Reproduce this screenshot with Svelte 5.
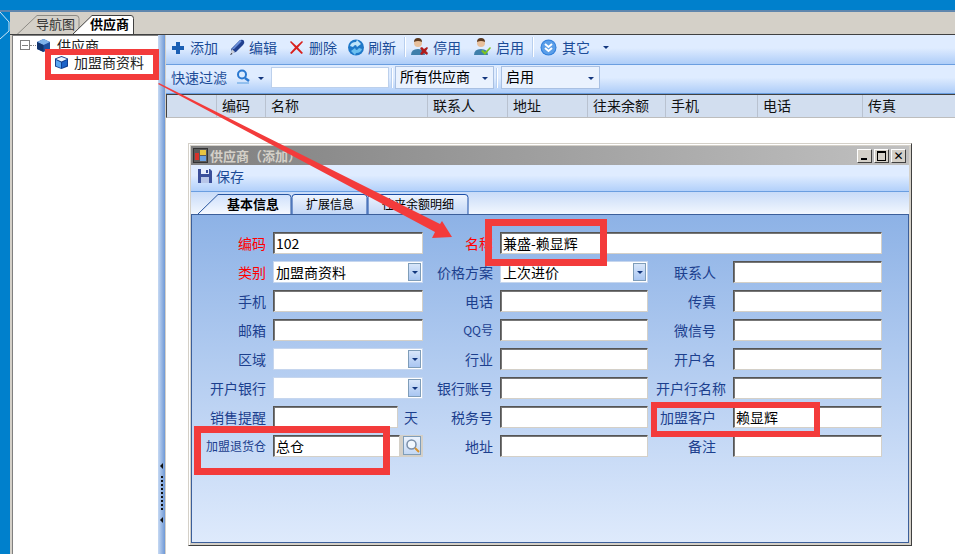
<script>
	const columns = [
		{ name: '', w: 50 }, { name: '编码', w: 49 }, { name: '名称', w: 162 }, { name: '联系人', w: 80 },
		{ name: '地址', w: 80 }, { name: '往来余额', w: 78 }, { name: '手机', w: 92 }, { name: '电话', w: 105 }, { name: '传真', w: 93 }
	];

	// each row: label / field pairs, left to right
	const rows = [
		[{ label: '编码', red: true, value: '102' }, { label: '名称', red: true, value: '兼盛-赖显辉', span: true }],
		[{ label: '类别', red: true, value: '加盟商资料', type: 'select' }, { label: '价格方案', value: '上次进价', type: 'select' }, { label: '联系人' }],
		[{ label: '手机' }, { label: '电话' }, { label: '传真' }],
		[{ label: '邮箱' }, { label: 'QQ号', small: true }, { label: '微信号' }],
		[{ label: '区域', type: 'select' }, { label: '行业' }, { label: '开户名' }],
		[{ label: '开户银行', type: 'select' }, { label: '银行账号' }, { label: '开户行名称', wide: true }],
		[{ label: '销售提醒', type: 'days' }, { label: '税务号' }, { label: '加盟客户', value: '赖显辉' }],
		[{ label: '加盟退货仓', small: true, value: '总仓', type: 'lookup' }, { label: '地址' }, { label: '备注' }]
	];
</script>

<div class="screen">
	<div class="topbar"></div>
	<div class="shell">
		<div class="edge">
			<svg width="10" height="28" viewBox="0 0 10 28"><path d="M0 0l9 10v9L0 27" fill="none" stroke="#cfe6f7"/></svg>
		</div>
		<div class="main">
			<div class="tabstrip">
				<svg class="tabshape" width="130" height="24" viewBox="0 0 130 24">
					<path d="M7 23.500L27 4.500h39q3 0 3 3V23.500" fill="#d4d0c8" stroke="#8c8a84"/>
					<path d="M62 24L82 4.500h39q2.500 0 2.500 3V24z" fill="#fff" stroke="#404040"/>
				</svg>
				<span class="tab t1">导航图</span>
				<span class="tab t2">供应商</span>
			</div>
			<div class="work">
				<div class="tree">
					<div class="node root">
						<span class="expander"></span>
						<span class="dots"></span>
						<svg width="15" height="15" viewBox="0 0 15 15">
							<path d="M7.500 1L14 4v7l-6.500 3L1 11V4z" fill="#1f4f9e"/>
							<path d="M7.500 1L14 4 7.500 7 1 4z" fill="#7fb2ea"/>
							<path d="M1 4l6.500 3v7L1 11z" fill="#12356f"/>
						</svg>
						<span>供应商</span>
					</div>
					<div class="node child">
						<svg width="15" height="15" viewBox="0 0 15 15">
							<path d="M7.500 1L14 3.500v8L7.500 14 1 11.500v-8z" fill="#123f8f"/>
							<path d="M7.500 2L13 4 7.500 6.500 2 4z" fill="#eaf5ff"/>
							<path d="M2 5l5 2.500V13l-5-2z" fill="#5aa6f0"/>
							<path d="M8 7.500L13 5v5.500L8 13z" fill="#1c63c8"/>
						</svg>
						<span>加盟商资料</span>
					</div>
				</div>
				<div class="splitter">
					<i class="grip left"></i>
					<i class="dotted"></i>
					<i class="grip"></i>
				</div>
				<div class="content">
					<div class="bar toolbar">
						<div class="tool first">
							<svg width="16" height="16" viewBox="0 0 16 16"><path d="M6 3h4v4h4v4h-4v4H6v-4H2V7h4z" fill="#1a5fb4"/></svg>
							<span>添加</span>
						</div>
						<div class="tool">
							<svg width="16" height="18" viewBox="0 0 16 18"><path d="M11 2q3-1 4 1t-1 4l-7 7-4 1-1-4z" fill="#21408f"/><path d="M11 2q1.500 0 1.500 1.500L5 11l-2 0z" fill="#6b90dc"/><path d="M3 11l3 3-5 3z" fill="#c9ced8"/><path d="M1 17l1.500-2 1 1z" fill="#223"/></svg>
							<span>编辑</span>
						</div>
						<div class="tool">
							<svg width="17" height="16" viewBox="0 0 17 16"><path d="M3 2l5.500 5L14 2l1 1-5 5.500 5 5.500-1.500 1L8.500 10 3.500 15 2 14l5-5.500L2 3z" fill="#d9201c"/></svg>
							<span>删除</span>
						</div>
						<div class="tool">
							<svg width="16" height="17" viewBox="0 0 16 17"><ellipse cx="8" cy="8.500" rx="8" ry="8" fill="#1f78c8"/><path d="M2 7q1-4 6-4l1-2 4 4-4 3-1-2q-2 0-3 2z" fill="#bfe4fa"/><path d="M14 10q-1 4-6 4l-1 2-4-4 4-3 1 2q2 0 3-2z" fill="#6cc0f0"/></svg>
							<span>刷新</span>
						</div>
						<i class="sep s1"></i>
						<div class="tool">
							<svg width="19" height="20" viewBox="0 0 19 20"><circle cx="8" cy="6" r="4" fill="#e8c09c"/><path d="M4 5q0-4 4-4t4 4q-4-2-8 0z" fill="#5c3a20"/><path d="M1 18q0-6 7-6t7 6z" fill="#3f7faa"/><path d="M10 11l2-1 2 2 3-2 1 1-2 3 2 2-1 2-3-2-2 2-2-1 2-3z" fill="#b01c1c"/></svg>
							<span>停用</span>
						</div>
						<div class="tool enable">
							<svg width="19" height="20" viewBox="0 0 19 20"><circle cx="8" cy="6" r="4" fill="#e8c09c"/><path d="M4 5q0-4 4-4t4 4q-4-2-8 0z" fill="#5c3a20"/><path d="M1 18q0-6 7-6t7 6z" fill="#3f7faa"/><path d="M8 14l2-1 2 2 5-5 1 1-6 7z" fill="#7cc520"/></svg>
							<span>启用</span>
						</div>
						<i class="sep"></i>
						<div class="tool other">
							<svg width="17" height="17" viewBox="0 0 17 17"><circle cx="8.500" cy="8.500" r="8" fill="#2f7fdc"/><circle cx="8.500" cy="8.500" r="7" fill="#5a9ee8"/><path d="M5 5l3.500 3L12 5M5 9l3.500 3L12 9" fill="none" stroke="#fff" stroke-width="2"/></svg>
							<span>其它</span>
						</div>
						<i class="caret other-caret"></i>
					</div>
					<div class="bar filter">
						<span class="filter-label">快速过滤</span>
						<svg class="finder" width="15" height="15" viewBox="0 0 15 15"><circle cx="6" cy="5.500" r="4" fill="#dcecff" stroke="#2a78d0" stroke-width="2"/><path d="M9 9l4 3" stroke="#2a78d0" stroke-width="2.500"/><path d="M1 14h12" stroke="#7fb4ea" stroke-width="1.500"/></svg>
						<i class="caret"></i>
						<div class="search"></div>
						<i class="sep short"></i>
						<div class="combo c1">所有供应商<i class="caret"></i></div>
						<i class="sep short"></i>
						<div class="combo c2">启用<i class="caret"></i></div>
					</div>
					<div class="gridarea">
						<div class="gridhead">
							{#each columns as c}
								<div class="col" style="width:{c.w}px">{c.name}</div>
							{/each}
						</div>

						<div class="window">
							<div class="titlebar">
								<svg width="15" height="15" viewBox="0 0 15 15">
									<rect x=".5" y=".5" width="14" height="14" fill="#5a5a5a" stroke="#333"/>
									<rect x="2" y="5" width="4" height="7" fill="#d8322a"/>
									<rect x="7" y="2" width="6" height="5" fill="#e8c440"/>
									<rect x="7" y="8" width="6" height="5" fill="#6aa0e0"/>
								</svg>
								<span class="title">供应商（添加）</span>
								<div class="winbtns">
									<button aria-label="最小化"><i class="mn"></i></button>
									<button aria-label="最大化"><i class="mx"></i></button>
									<button class="close" aria-label="关闭">✕</button>
								</div>
							</div>
							<div class="savebar">
								<svg width="16" height="16" viewBox="0 0 16 16"><path d="M1 1h12l2 2v12H1z" fill="#3b4f9a"/><path d="M4 1h8v5H4z" fill="#e8eefc"/><path d="M4 9h8v6H4z" fill="#b8c6e8"/><path d="M9 2h2v3H9z" fill="#3b4f9a"/></svg>
								<span>保存</span>
							</div>
							<div class="formtabs">
								<svg class="formtabshape" width="282" height="22" viewBox="0 0 282 22">
									<path d="M7 22L27 2.500h70q3 0 3 3V22" fill="url(#active)" stroke="#27559f"/>
									<path d="M101 22V5.500q0-3 3-3h69q3 0 3 3V22" fill="url(#idle)" stroke="#1c4ea6"/>
									<path d="M177 22V5.500q0-3 3-3h94q3 0 3 3V22" fill="url(#idle)" stroke="#1c4ea6"/>
									<defs>
										<linearGradient id="active" x1="0" y1="0" x2="0" y2="1"><stop offset="0" stop-color="#cfe0fb"/><stop offset="1" stop-color="#f5f9ff"/></linearGradient>
										<linearGradient id="idle" x1="0" y1="0" x2="0" y2="1"><stop offset="0" stop-color="#eef4fe"/><stop offset="1" stop-color="#c4d8f6"/></linearGradient>
									</defs>
								</svg>
								<span class="ftab base">基本信息</span>
								<span class="ftab ext">扩展信息</span>
								<span class="ftab bal">往来余额明细</span>
							</div>
							<div class="panel">
								<div class="form">
									{#each rows as row}
										{#each row as f, i}
											<span class="lbl" class:red={f.red} class:small={f.small} class:third={i === 2 && !f.wide}>{f.label}</span>
											{#if f.type === 'select'}
												<div class="select">
													<span>{f.value ?? ''}</span>
													<b class="dropbtn"><i></i></b>
												</div>
											{:else if f.type === 'days'}
												<div class="days"><div class="input">{f.value ?? ''}</div><span>天</span></div>
											{:else if f.type === 'lookup'}
												<div class="lookup">
													<div class="input">{f.value}</div>
													<b class="lookbtn">
														<svg width="15" height="15" viewBox="0 0 15 15"><circle cx="6.500" cy="6.500" r="4.500" fill="#f2f8ff" stroke="#7a8ea8" stroke-width="1.500"/><path d="M10 10l4 4" stroke="#d9922e" stroke-width="2"/></svg>
													</b>
												</div>
											{:else}
												<div class="input" class:span={f.span}>{f.value ?? ''}</div>
											{/if}
										{/each}
									{/each}
								</div>
							</div>
						</div>
					</div>
				</div>
			</div>
		</div>
	</div>

	<!-- annotations drawn over the screenshot -->
	<i class="mark m1"></i>
	<i class="mark m2"></i>
	<i class="mark m3"></i>
	<i class="mark m4"></i>
	<svg class="arrow" width="955" height="554" viewBox="0 0 955 554">
		<path d="M158 84l1-1 281 141 2-3 10 16-20 1 3-6z" fill="#f33b3b"/>
	</svg>
</div>

<style>
	:global(body) {
		margin: 0;
	}
	.screen {
		position: relative;
		width: 955px;
		height: 554px;
		overflow: hidden;
		display: flex;
		flex-direction: column;
		background: #0080cc;
		font: 14px/16px "Noto Sans CJK SC", "Liberation Sans", sans-serif;
		color: #000;
	}
	.screen i {
		font-style: normal;
	}
	.topbar {
		height: 10px;
		flex: none;
		background: #0080cc;
		border-bottom: 2px solid #5f86ad;
	}
	.shell {
		flex: 1;
		display: flex;
		min-height: 0;
	}
	.edge {
		width: 10px;
		flex: none;
		background: #0080cc;
	}
	.edge svg {
		display: block;
	}
	.main {
		flex: 1;
		display: flex;
		flex-direction: column;
		min-width: 0;
		background: #d4d0c8;
	}

	.tabstrip {
		position: relative;
		height: 22px;
		flex: none;
		display: flex;
		border-bottom: 1px solid #404040;
		background: #d4d0c8;
		overflow: hidden;
	}
	.tabshape {
		position: absolute;
		left: 0;
		top: -1px;
	}
	.tab {
		position: relative;
		margin-top: 2px;
		height: 20px;
		line-height: 20px;
		font-size: 14px;
	}
	.t1 {
		margin-left: 26px;
		color: #333;
		font-size: 13px;
	}
	.t2 {
		margin-left: 15px;
		font-weight: 700;
		font-size: 13px;
	}

	.work {
		flex: 1;
		display: flex;
		min-height: 0;
		padding-left: 2px;
		background: #fff;
		box-shadow: inset 2px 0 0 #d4d0c8;
	}
	.tree {
		width: 146px;
		flex: none;
		padding: 1px 0 0 7px;
		box-sizing: border-box;
		background: #fff;
		border-left: 1px solid #808080;
		border-top: 1px solid #808080;
	}
	.node {
		display: flex;
		align-items: center;
		height: 16px;
		gap: 5px;
		color: #222;
	}
	.root {
		gap: 0;
	}
	.root svg {
		margin-right: 6px;
	}
	.expander {
		width: 8px;
		height: 8px;
		border: 1px solid #808080;
		background: linear-gradient(#808080, #808080) center / 6px 1px no-repeat;
		flex: none;
	}
	.dots {
		width: 6px;
		border-top: 1px dotted #808080;
	}
	.child {
		margin: 1px 0 0 34px;
	}
	.splitter {
		width: 8px;
		flex: none;
		background: linear-gradient(90deg, #c6d9f3, #6e98d6);
		border-right: 1px solid #d4d0c8;
		display: flex;
		flex-direction: column;
		align-items: center;
		padding-top: 428px;
		box-sizing: border-box;
	}
	.grip {
		width: 0;
		height: 0;
		border: 3px solid transparent;
		border-right-color: #111;
		border-left-width: 0;
	}
	.dotted {
		height: 34px;
		margin: 7px 0;
		border-left: 2px dotted #111;
	}

	.content {
		flex: 1;
		display: flex;
		flex-direction: column;
		min-width: 0;
		background: #fff;
	}
	.bar {
		display: flex;
		align-items: center;
		flex: none;
		box-sizing: border-box;
		background: linear-gradient(#dfecff 0, #dfecff 45%, #aecdf8 100%);
		color: #1c4c98;
	}
	.toolbar {
		height: 30px;
		padding: 0 0 5px 4px;
		gap: 11px;
		border-bottom: 1px solid #6a9ee0;
	}
	.tool {
		display: flex;
		align-items: center;
		gap: 4px;
	}
	.sep {
		width: 1px;
		height: 20px;
		background: #fff;
		box-shadow: -1px 0 0 #b8cfef;
		margin: 0 -5px 0 -2px;
	}
	.sep.s1 {
		margin-right: -7px;
	}
	.sep.short {
		height: 20px;
		margin: 0 2px 0 3px;
	}
	.tool.enable {
		margin-left: 1px;
	}
	.tool.other {
		gap: 5px;
		margin-left: 0;
	}
	.caret {
		display: block;
		flex: none;
		width: 0;
		height: 0;
		border: 3px solid transparent;
		border-top: 3px solid #12367e;
		border-bottom-width: 0;
	}
	.other-caret {
		margin-left: 2px;
	}
	.filter {
		height: 29px;
		padding: 0 0 3px 5px;
		border-bottom: 1px solid #6a9ee0;
	}
	.filter-label {
		margin: -2px 9px 0 0;
	}
	.finder {
		margin-top: -2px;
	}
	.filter > .caret {
		margin: 2px 8px 0 7px;
	}
	.search {
		width: 118px;
		height: 21px;
		background: #fff;
		box-sizing: border-box;
		border: 1px solid #bcd0ec;
		margin-left: -1px;
	}
	.combo {
		position: relative;
		height: 23px;
		box-sizing: border-box;
		border: 1px solid #a9c0e2;
		background: #eaf2fe;
		color: #000;
		padding: 1px 0 0 4px;
		line-height: 16px;
	}
	.combo .caret {
		position: absolute;
		right: 5px;
		top: 10px;
	}
	.c1 {
		width: 99px;
	}
	.c2 {
		width: 99px;
		margin-left: 1px;
	}

	.gridarea {
		position: relative;
		flex: 1;
		border-top: 1px solid #404040;
		background: #fff;
	}
	.gridhead {
		display: flex;
		height: 22px;
		background: #d2deef;
		border-bottom: 1px solid #bdbdbd;
		border-left: 1px solid #404040;
		color: #111;
	}
	.col {
		box-sizing: border-box;
		border-right: 1px solid #b9c2d0;
		padding: 2px 0 0 5px;
		flex: none;
		white-space: nowrap;
	}

	.window {
		position: absolute;
		left: 22px;
		top: 48px;
		width: 724px;
		height: 403px;
		box-sizing: border-box;
		display: flex;
		flex-direction: column;
		padding: 2px;
		background: #d4d0c8;
		border: 1px solid #d4d0c8;
		border-right-color: #404040;
		border-bottom-color: #404040;
		box-shadow: inset 1px 1px 0 #fff;
	}
	.titlebar {
		height: 19px;
		flex: none;
		display: flex;
		align-items: center;
		gap: 2px;
		padding: 0 3px 0 2px;
		background: linear-gradient(90deg, #808080, #c0c0c0);
		color: #d4d0c8;
		font-weight: 700;
		font-size: 13px;
	}
	.title {
		flex: 1;
	}
	.winbtns {
		display: flex;
		gap: 2px;
	}
	.winbtns button {
		position: relative;
		width: 15px;
		height: 14px;
		padding: 0;
		border: 1px solid;
		border-color: #fff #404040 #404040 #fff;
		background: #d4d0c8;
		font: 700 12px/12px "DejaVu Sans", sans-serif;
		color: #000;
	}
	.mn {
		position: absolute;
		left: 3px;
		bottom: 2px;
		width: 6px;
		height: 2px;
		background: #000;
	}
	.mx {
		position: absolute;
		left: 2px;
		top: 1px;
		width: 7px;
		height: 7px;
		border: 1px solid #000;
		border-top-width: 2px;
	}
	.savebar {
		height: 27px;
		flex: none;
		box-sizing: border-box;
		display: flex;
		align-items: center;
		gap: 3px;
		padding: 0 0 5px 6px;
		background: linear-gradient(#dfecff 0, #dfecff 40%, #b2d0fa 100%);
		border-bottom: 1px solid #6a9ee0;
		color: #1c4c98;
	}
	.formtabs {
		position: relative;
		height: 22px;
		flex: none;
		display: flex;
		background: linear-gradient(#c8dbf8, #f2f7fe);
		overflow: hidden;
	}
	.formtabshape {
		position: absolute;
		left: 0;
		top: 0;
	}
	.ftab {
		position: relative;
		font-size: 12px;
		line-height: 20px;
		margin-top: 2px;
		color: #000;
	}
	.base {
		margin-left: 36px;
		font-weight: 700;
		font-size: 13px;
	}
	.ext {
		margin-left: 27px;
	}
	.bal {
		margin-left: 28px;
	}
	.panel {
		flex: 1;
		min-height: 0;
		box-sizing: border-box;
		padding-top: 17px;
		background: linear-gradient(#8db2e6, #deeafc);
		border: 1px solid #3c5f9a;
	}
	.form {
		display: grid;
		grid-template-columns: 81px 150px 77px 148px 85px 149px;
		grid-auto-rows: 22px;
		row-gap: 7px;
	}
	.lbl {
		display: block;
		text-align: right;
		padding-right: 7px;
		line-height: 22px;
		color: #1c3f8e;
		white-space: nowrap;
	}
	.lbl.red {
		color: #f00;
	}
	.lbl.small {
		font-size: 12px;
	}
	.lbl.third {
		padding-right: 17px;
	}
	.input {
		box-sizing: border-box;
		height: 22px;
		background: #fff;
		border: 1px solid;
		border-color: #555 #d4d0c8 #d4d0c8 #555;
		box-shadow: inset 1px 1px 0 #777;
		padding-left: 2px;
		line-height: 20px;
		overflow: hidden;
		white-space: nowrap;
	}
	.input.span {
		grid-column: span 3;
	}
	.select {
		box-sizing: border-box;
		height: 22px;
		position: relative;
		background: #fff;
		border: 1px solid #c6d6ee;
		padding-left: 2px;
		line-height: 20px;
	}
	.dropbtn {
		position: absolute;
		right: 1px;
		top: 1px;
		width: 13px;
		height: 18px;
		box-sizing: border-box;
		border: 1px solid #7f9db9;
		background: linear-gradient(#d8e6fa, #a9c6f2);
	}
	.dropbtn i {
		position: absolute;
		left: 3px;
		top: 7px;
		border: 3px solid transparent;
		border-top-color: #12367e;
		border-bottom-width: 0;
	}
	.days {
		display: flex;
		gap: 6px;
		color: #1c3f8e;
		line-height: 22px;
	}
	.days .input {
		width: 125px;
	}
	.lookup {
		position: relative;
		height: 22px;
		background: #d4d0c8;
	}
	.lookup .input {
		width: 127px;
	}
	.lookbtn {
		position: absolute;
		right: 2px;
		top: 1px;
		width: 18px;
		height: 19px;
		box-sizing: border-box;
		border: 1px solid #7f9db9;
		background: linear-gradient(#edf4fe, #c4d8f4);
		display: flex;
		align-items: center;
		justify-content: center;
	}

	.mark {
		position: absolute;
		display: block;
		box-sizing: border-box;
		border: 6px solid #f33b3b;
	}
	.m1 {
		left: 45px;
		top: 49px;
		width: 114px;
		height: 31px;
	}
	.m2 {
		left: 485px;
		top: 219px;
		width: 122px;
		height: 47px;
		border-width: 7px;
	}
	.m3 {
		left: 194px;
		top: 426px;
		width: 196px;
		height: 49px;
		border-width: 7px;
	}
	.m4 {
		left: 651px;
		top: 402px;
		width: 169px;
		height: 35px;
	}
	.arrow {
		position: absolute;
		left: 0;
		top: 0;
		pointer-events: none;
	}
</style>
